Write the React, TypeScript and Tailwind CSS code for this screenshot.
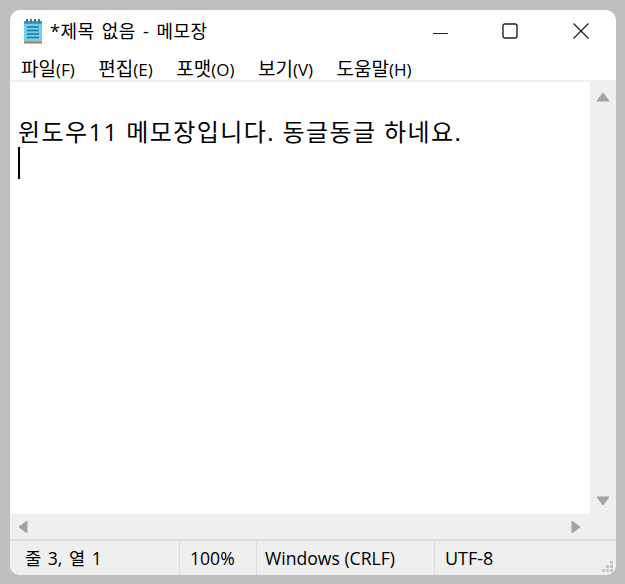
import React from 'react';

const font = { fontFamily: '"Open Sans", "Noto Sans CJK KR", sans-serif' };

const NotepadIcon = () => (
  <svg width="20" height="26" viewBox="0 0 20 26">
    <rect x="1" y="3" width="18" height="22" fill="#74cdec" />
    <rect x="1" y="23.5" width="18" height="2" fill="#b07f56" />
    <rect x="1" y="3" width="18" height="3" fill="#3d9dc4" />
    <path d="M4 1v4M8 1v4M12 1v4M16 1v4" stroke="#2f7f9f" strokeWidth="2" />
    <path d="M4 9h12M4 12.5h12M4 16h12M4 19.5h12" stroke="#1f7a9c" strokeWidth="1.5" />
  </svg>
);

const Triangle = ({ dir }: { dir: 'up' | 'down' | 'left' | 'right' }) => {
  const points = {
    up: '0,9 6,1 12,9',
    down: '0,1 12,1 6,9',
    left: '9,0 9,12 1,6',
    right: '1,0 1,12 9,6',
  }[dir];
  const vertical = dir === 'up' || dir === 'down';
  return (
    <svg width={vertical ? 12 : 10} height={vertical ? 10 : 12} viewBox={vertical ? '0 0 12 10' : '0 0 10 12'}>
      <polygon points={points} fill="#a3a3a3" strokeLinejoin="round" stroke="#a3a3a3" />
    </svg>
  );
};

const Grip = () => (
  <svg width="12" height="12" viewBox="0 0 12 12" className="absolute right-[2px] bottom-[2px]">
    <path d="M8 0h3v3H8zM4 4h3v3H4zM8 4h3v3H8zM0 8h3v3H0zM4 8h3v3H4zM8 8h3v3H8z" fill="#c4c4c4" />
  </svg>
);

const menus = [
  ['파일', '(F)'],
  ['편집', '(E)'],
  ['포맷', '(O)'],
  ['보기', '(V)'],
  ['도움말', '(H)'],
];

export default function App() {
  return (
    <div className="w-[625px] h-[584px] bg-[#bfbfbf] pl-[10px] pr-[9px] pt-[10px] pb-[9px]" style={font}>
      <div className="relative flex flex-col w-full h-full bg-white rounded-[10px] overflow-hidden text-black">
        <div className="flex items-center h-[41px] shrink-0">
          <div className="ml-[13px] flex items-center">
            <NotepadIcon />
          </div>
          <span className="ml-[7px] text-[18px] leading-[20px] tracking-[0.5px] [word-spacing:2px]">*제목 없음 - 메모장</span>
          <div className="ml-auto flex items-center">
            <svg width="16" height="16" viewBox="0 0 16 16" className="mr-[54px]">
              <path d="M1 10.5h15" stroke="#222" strokeWidth="1" />
            </svg>
            <svg width="16" height="16" viewBox="0 0 16 16" className="mr-[54px]">
              <rect x="1" y="1" width="14" height="14" rx="2" fill="none" stroke="#222" strokeWidth="1.4" />
            </svg>
            <svg width="18" height="18" viewBox="0 0 18 18" className="mr-[26px]">
              <path d="M1.5 1.5l15 15M16.5 1.5l-15 15" stroke="#222" strokeWidth="1.3" />
            </svg>
          </div>
        </div>

        <div className="flex items-center gap-[23.5px] h-[31px] pl-[11px] pt-[7px] shrink-0 border-b-2 border-[#f0f0f0] text-[17px] leading-[20px]">
          {menus.map(([label, key]) => (
            <span key={key}>
              <span className="text-[19px]">{label}</span>
              {key}
            </span>
          ))}
        </div>

        <div className="flex flex-1 min-h-0">
          <div className="flex-1 pl-[8px] pt-[33px] text-[24px] leading-[32px] tracking-[1.4px]">
            <div className="h-[32px] pt-[1px]">윈도우11 메모장입니다. 동글동글 하네요.</div>
            <div className="w-[2px] h-[32px] bg-black" />
          </div>
          <div className="flex flex-col items-center justify-between w-[26px] bg-[#efefef] pt-[10px] pb-[8px]">
            <Triangle dir="up" />
            <Triangle dir="down" />
          </div>
        </div>

        <div className="flex items-center justify-between h-[25px] shrink-0 bg-[#efefef] pl-[8px] pr-[35px]">
          <Triangle dir="left" />
          <Triangle dir="right" />
        </div>

        <div className="flex items-stretch h-[36px] shrink-0 bg-[#efefef] border-t-2 border-[#dcdcdc] text-[17.6px] leading-[20px]">
          <div className="flex items-center w-[170px] pl-[15px] border-r border-[#dcdcdc] [word-spacing:2px]">줄 3, 열 1</div>
          <div className="flex items-center w-[77px] pl-[10px] border-r border-[#dcdcdc]">100%</div>
          <div className="flex items-center w-[178px] pl-[8px] border-r border-[#dcdcdc]">Windows (CRLF)</div>
          <div className="flex items-center pl-[10px] text-[18px]">UTF-8</div>
        </div>
        <Grip />
      </div>
    </div>
  );
}
